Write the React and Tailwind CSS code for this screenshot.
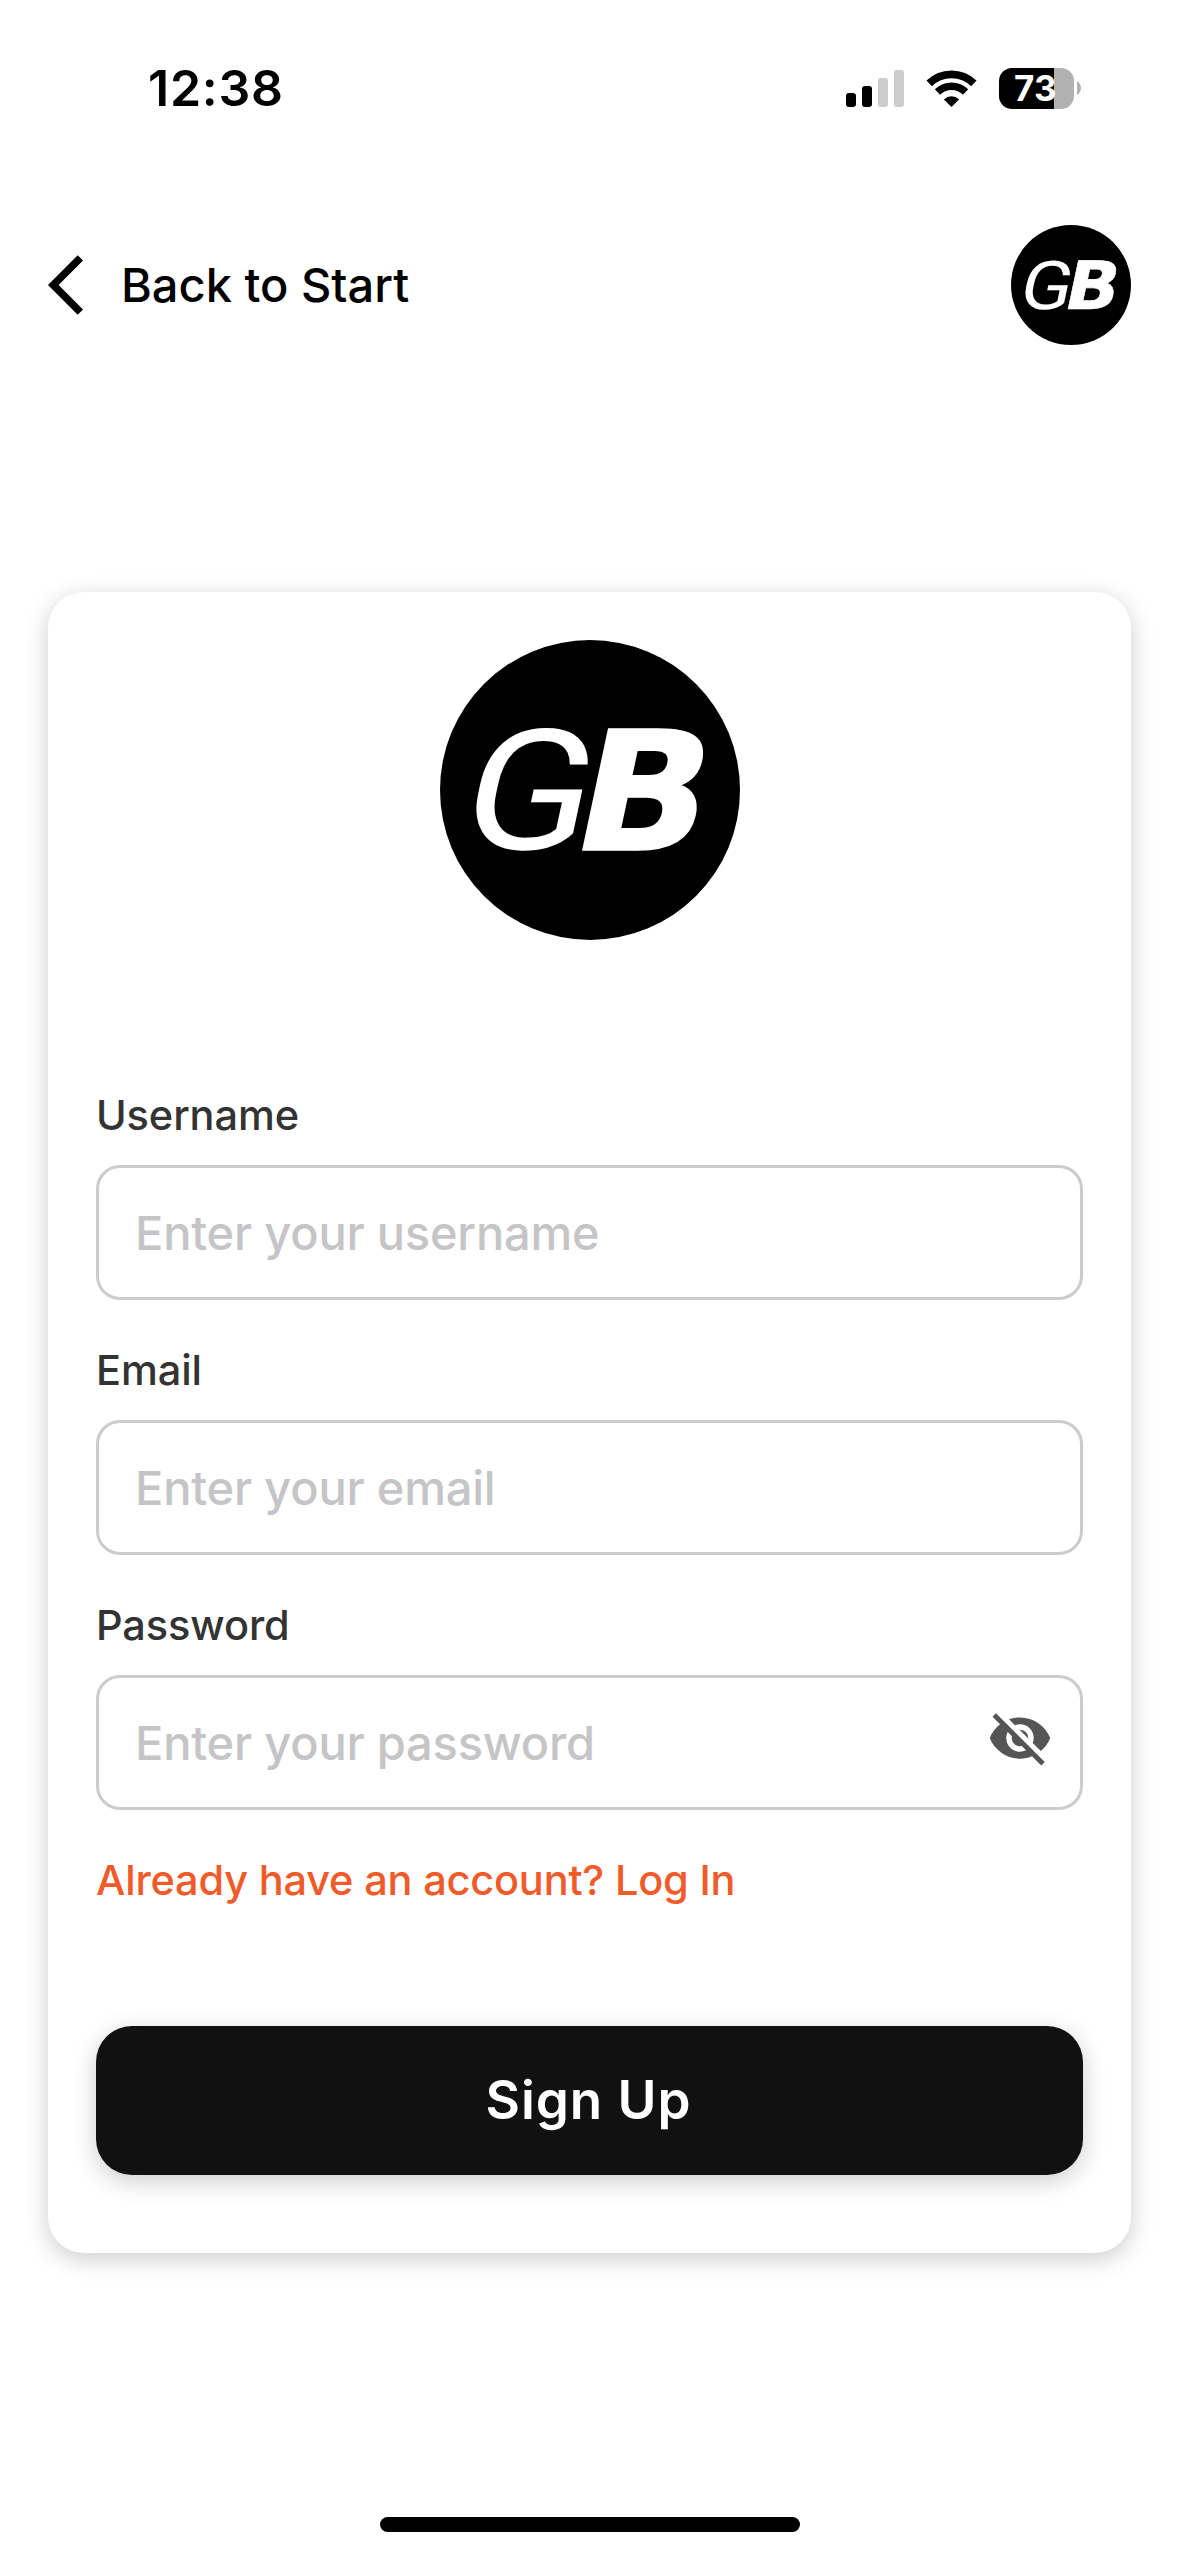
import { MdVisibilityOff } from "react-icons/md";

function Logo({ className }) {
  return (
    <svg viewBox="0 0 300 300" className={className} role="img" aria-label="GB">
      <circle cx="150" cy="150" r="150" fill="#000" />
      <g fill="#fff">
        <text transform="translate(22 209) skewX(-12) scale(1.12 1)" fontFamily="Roboto" fontSize="168" fontWeight="400" x="-6">
          G
        </text>
        <text transform="translate(127 210) skewX(-12) scale(1.05 1)" fontFamily="DejaVu Sans" fontSize="166" fontWeight="700" stroke="#fff" strokeWidth="1.5">
          B
        </text>
      </g>
    </svg>
  );
}

function StatusBar() {
  return (
    <div className="flex h-44 items-start pl-[148px] pr-[98px] pt-[58px]">
      <span className="h-[60px] text-[50px] font-semibold leading-[60px] tracking-[0.74px]">12:38</span>
      <div className="ml-auto flex h-[60px] items-center">
        <svg width="58" height="37" viewBox="0 0 58 37" className="mr-[22px]">
          <rect x="0" y="23" width="10" height="14" rx="3" />
          <rect x="16" y="16" width="10" height="21" rx="3" />
          <rect x="32" y="8" width="10" height="29" rx="3" fill="#ccc" />
          <rect x="48" y="0" width="10" height="37" rx="3" fill="#ccc" />
        </svg>
        <svg width="51" height="37" viewBox="0 0 51 37" className="mr-[22px]">
          <path d="M3.2 13.4a32 32 0 0 1 44.6 0" fill="none" stroke="#000" strokeWidth="7.8" />
          <path d="M11.4 22a20.2 20.2 0 0 1 28.2 0" fill="none" stroke="#000" strokeWidth="7.4" />
          <path d="M25.5 37 17.9 29.4a11 11 0 0 1 15.2 0z" />
        </svg>
        <div className="flex h-[41px] w-[75px] items-center justify-center rounded-[13px] bg-[linear-gradient(to_right,#000_55px,#b1b1b1_55px)] text-[35px] font-bold leading-[41px] tracking-[0.2px] text-white">
          <span className="-ml-[2px]">73</span>
        </div>
        <svg width="4" height="14" viewBox="0 0 4 14" className="ml-[3px]">
          <path d="M0 0q4 2.5 4 7t-4 7z" fill="#b1b1b1" />
        </svg>
      </div>
    </div>
  );
}

function Field({ label, type, placeholder, icon }) {
  return (
    <label className="mb-[45px] flex flex-col gap-[25px]">
      <span className="h-[50px] text-[41.5px] font-[450] leading-[50px] tracking-[-0.1px] text-[#333]">{label}</span>
      <span className="flex h-[135px] items-center rounded-3xl border-3 border-[#ccc] pl-9 pr-[27px]">
        <input
          type={type}
          placeholder={placeholder}
          className="h-full min-w-0 flex-1 bg-transparent text-[47px] font-[450] tracking-[-0.2px] outline-none placeholder:text-[#c5c5c7]"
        />
        {icon}
      </span>
    </label>
  );
}

export default function App() {
  return (
    <div className="flex h-[2556px] w-[1179px] flex-col bg-white font-[Inter,sans-serif] text-black">
      <StatusBar />
      <header className="flex h-[218px] items-center justify-between px-12">
        <button className="flex items-center">
          <svg width="72" height="72" viewBox="0 0 24 24">
            <path d="M11.67 3.87 9.9 2.1 0 12l9.9 9.9 1.77-1.77L3.54 12z" />
          </svg>
          <span className="ml-px text-[47px] font-medium leading-[60px]">Back to Start</span>
        </button>
        <Logo className="size-[120px]" />
      </header>

      <main className="mx-12 mt-[198px] flex h-[1661px] flex-col rounded-[36px] bg-white px-12 pt-12 shadow-[0_6px_24px_rgba(0,0,0,0.2)]">
        <Logo className="mb-[150px] size-[300px] self-center" />
        <Field label="Username" type="text" placeholder="Enter your username" />
        <Field label="Email" type="email" placeholder="Enter your email" />
        <Field
          label="Password"
          type="password"
          placeholder="Enter your password"
          icon={<MdVisibilityOff className="mb-2.5 size-[66px] text-[#555]" />}
        />
        <a className="h-[50px] text-[41.5px] font-[450] leading-[50px] tracking-[-0.2px] text-[#f15a29]">
          Already have an account? Log In
        </a>
        <button className="mt-[121px] h-[149px] rounded-[36px] bg-[#111] pr-0.5 pt-px text-[53px] font-semibold tracking-[0.95px] text-white shadow-[0_6px_24px_rgba(0,0,0,0.2)]">
          Sign Up
        </button>
      </main>

      <div className="mb-6 mt-auto h-[15px] w-[420px] self-center rounded-full bg-black" />
    </div>
  );
}
